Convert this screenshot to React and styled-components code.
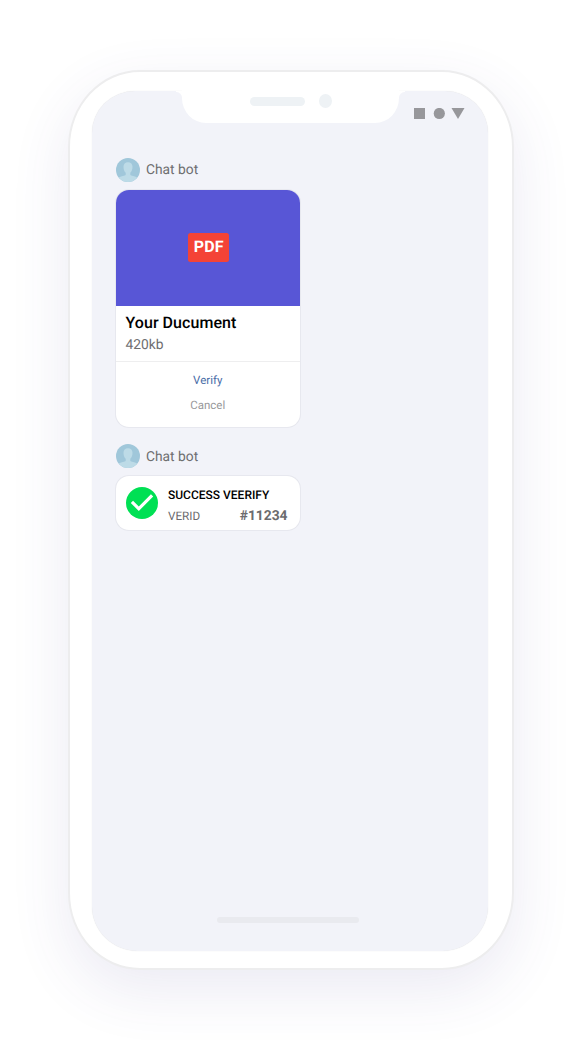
import React from "react";
import styled, { createGlobalStyle } from "styled-components";

const GlobalStyle = createGlobalStyle`
  * { box-sizing: border-box; }
  body { margin: 0; background: #fff; font-family: Roboto, sans-serif; text-rendering: geometricPrecision; }
`;

const Page = styled.main`
  width: 580px;
  height: 1040px;
  padding: 70px 0 0 68px;
  overflow: hidden;
  background: #fff;
`;

const Phone = styled.div`
  width: 446px;
  height: 900px;
  padding: 18.5px 22px 0;
  border: 2px solid #ededee;
  border-radius: 72px / 77px;
  background: #fff;
  box-shadow: 0 20px 60px rgba(72, 60, 150, 0.11);
`;

const Screen = styled.div`
  display: flex;
  flex-direction: column;
  width: 396px;
  height: 860.5px;
  border-radius: 43px 43px 46px 46px / 42px 42px 45px 45px;
  background: #f2f3f9;
  box-shadow: 0 0 1px rgba(0, 0, 0, 0.14);
`;

const TopBar = styled.header`
  display: flex;
  height: 67.5px;
  padding-left: 89.5px;
`;

const Notch = styled.div`
  position: relative;
  display: flex;
  gap: 14px;
  width: 217px;
  height: 33px;
  margin-top: -1px;
  padding: 4.5px 0 0 68.5px;
  border-radius: 0 0 24px 24px / 0 0 25px 25px;
  background: #fff;

  &::before,
  &::after {
    content: "";
    position: absolute;
    top: 1px;
    width: 6px;
    height: 7px;
  }
  &::before {
    right: 100%;
    background: radial-gradient(circle at 0 100%, transparent 5.5px, #fff 6.5px);
  }
  &::after {
    left: 100%;
    background: radial-gradient(circle at 100% 100%, transparent 5.5px, #fff 6.5px);
  }
`;

const Speaker = styled.span`
  width: 55px;
  height: 8.5px;
  margin-top: 3px;
  border-radius: 4.5px;
  background: #eef2f5;
`;

const Camera = styled.span`
  width: 13px;
  height: 14px;
  border-radius: 50%;
  background: #eef2f5;
`;

const StatusIcons = styled.svg`
  width: 51px;
  height: 12px;
  margin: 17.5px 0 0 15.5px;
  fill: #97979b;
`;

const Chat = styled.section`
  flex: 1;
  padding-left: 24px;
`;

const Sender = styled.div`
  display: flex;
  align-items: flex-start;
  gap: 6px;
  height: 32px;
  color: #6e6e70;
  font-size: 13.8px;
  line-height: ${(p) => (p.$lowered ? 26 : 24)}px;
`;

const AvatarSvg = styled.svg`
  width: 24px;
  height: 24px;
`;

const Card = styled.article`
  width: 183.5px;
  border-radius: 13px;
  background: #fff;
  box-shadow: 0 0 0 1px rgba(30, 30, 60, 0.035), 0 0 2px rgba(0, 0, 0, 0.06);
`;

const DocumentCard = styled(Card)`
  height: 236.5px;
  margin-bottom: 17.5px;
  overflow: hidden;
`;

const Preview = styled.div`
  display: flex;
  align-items: center;
  justify-content: center;
  height: 116px;
  padding: 0 0 2px 2px;
  background: #5856d6;
`;

const FileBadge = styled.span`
  width: 41px;
  height: 29px;
  border-radius: 2.5px;
  background: #f44336;
  color: #fff;
  font-size: 16px;
  font-weight: 700;
  letter-spacing: 0.2px;
  line-height: 28px;
  text-align: center;
`;

const FileInfo = styled.div`
  height: 56px;
  padding: 6px 9.5px 0;
  border-bottom: 1.5px solid #eeeeef;
`;

const FileName = styled.h2`
  margin: 0;
  color: #000;
  font-size: 16px;
  font-weight: 500;
  letter-spacing: 0.05px;
  line-height: 22px;
`;

const FileSize = styled.p`
  margin: 0;
  color: #6e6e70;
  font-size: 13.8px;
  line-height: 22.5px;
`;

const Actions = styled.div`
  display: flex;
  flex-direction: column;
  padding-top: 6px;
`;

const Action = styled.button`
  height: 25px;
  padding: 0;
  border: 0;
  background: none;
  color: ${(p) => (p.$primary ? "#4a6da7" : "#98989b")};
  font: 400 11.5px/25px Roboto, sans-serif;
  text-rendering: inherit;
`;

const ResultCard = styled(Card)`
  display: flex;
  gap: 10px;
  height: 53.5px;
  padding: 11px 12px 0 10px;
`;

const CheckSvg = styled.svg`
  flex: none;
  width: 32px;
  height: 32px;
`;

const ResultBody = styled.div`
  flex: 1;
`;

const ResultTitle = styled.h3`
  margin: -2px 0 0;
  color: #000;
  font-size: 12px;
  font-weight: 500;
  line-height: 20px;
  white-space: nowrap;
`;

const ResultRow = styled.div`
  display: flex;
  justify-content: space-between;
  color: #6b6b6e;
  font-size: 11.7px;
  line-height: 22px;
`;

const ResultId = styled.strong`
  font-size: 13.8px;
  font-weight: 700;
  line-height: 22px;
`;

const HomeBar = styled.div`
  align-self: center;
  width: 142px;
  height: 6px;
  margin: 0 4px 28px 0;
  border-radius: 3px;
  background: #e9eaef;
`;

function Avatar() {
  return (
    <AvatarSvg viewBox="0 0 24 24">
      <defs>
        <clipPath id="avatar-clip">
          <circle cx="12" cy="12" r="12" />
        </clipPath>
      </defs>
      <g clipPath="url(#avatar-clip)">
        <rect width="24" height="24" fill="#a0c7da" />
        <path
          fill="#bddbe7"
          d="M12 4.300c2.900 0 4.500 1.800 4.500 4.500 0 2.800-.8 4.700-2.200 6v1.700c0 .6.7 1 1.700 1.200 3 .6 4.800 1.300 6 2.500V24H2v-3.800c1.200-1.200 3-1.900 6-2.500 1-.2 1.700-.6 1.700-1.200v-1.700c-1.400-1.300-2.200-3.200-2.200-6 0-2.700 1.600-4.500 4.500-4.500z"
        />
      </g>
    </AvatarSvg>
  );
}

function ChatSender({ lowered }) {
  return (
    <Sender $lowered={lowered}>
      <Avatar />
      <span>Chat bot</span>
    </Sender>
  );
}

export default function App() {
  return (
    <Page>
      <GlobalStyle />
      <Phone>
        <Screen>
          <TopBar>
            <Notch>
              <Speaker />
              <Camera />
            </Notch>
            <StatusIcons viewBox="0 0 51 12">
              <rect x="0" y="0" width="11" height="11" />
              <circle cx="25.300" cy="5.500" r="5.600" />
              <path d="M37.500 0h13l-6.500 11z" />
            </StatusIcons>
          </TopBar>
          <Chat>
            <ChatSender />
            <DocumentCard>
              <Preview>
                <FileBadge>PDF</FileBadge>
              </Preview>
              <FileInfo>
                <FileName>Your Ducument</FileName>
                <FileSize>420kb</FileSize>
              </FileInfo>
              <Actions>
                <Action $primary>Verify</Action>
                <Action>Cancel</Action>
              </Actions>
            </DocumentCard>
            <ChatSender lowered />
            <ResultCard>
              <CheckSvg viewBox="2 2 20 20">
                <circle cx="12" cy="12" r="10" fill="#00e054" />
                <path
                  fill="#fff"
                  d="M10 17l-5-5 1.410-1.410L10 14.170l7.590-7.590L19 8z"
                />
              </CheckSvg>
              <ResultBody>
                <ResultTitle>SUCCESS VEERIFY</ResultTitle>
                <ResultRow>
                  <span>VERID</span>
                  <ResultId>#11234</ResultId>
                </ResultRow>
              </ResultBody>
            </ResultCard>
          </Chat>
          <HomeBar />
        </Screen>
      </Phone>
    </Page>
  );
}
